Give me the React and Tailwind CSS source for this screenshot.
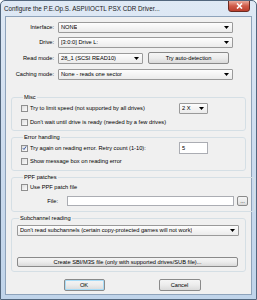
import React from "react";

function Arrow() {
  return (
    <svg width="5" height="3" viewBox="0 0 5 3" className="shrink-0">
      <path d="M0 0H5L2.5 3Z" fill="#000" />
    </svg>
  );
}

function Combo({ text, className = "" }) {
  return (
    <div
      className={
        "flex items-center justify-between h-[11px] pl-[2px] pr-[3px] border border-[#9a9a9a] rounded-[1px] bg-gradient-to-b from-[#fdfdfd] to-[#ebebeb] " +
        className
      }
    >
      <span className="truncate">{text}</span>
      <Arrow />
    </div>
  );
}

function Button({ children, className = "" }) {
  return (
    <div
      className={
        "flex items-center justify-center border border-[#8a8a8a] rounded-[2px] bg-gradient-to-b from-[#f5f5f5] via-[#ececec] to-[#dadada] " +
        className
      }
    >
      {children}
    </div>
  );
}

function Check({ checked, label }) {
  return (
    <div className="flex items-center gap-[2px] h-[9px]">
      <div className="w-[7px] h-[7px] border border-[#8f8f8f] bg-gradient-to-br from-[#dedede] to-[#fbfbfb] flex items-center justify-center shrink-0">
        {checked && (
          <svg width="6" height="6" viewBox="0 0 6 6">
            <path d="M1 3.2L2.4 4.8L5 1" stroke="#3b5aa0" strokeWidth="1.2" fill="none" />
          </svg>
        )}
      </div>
      <span className="whitespace-nowrap">{label}</span>
    </div>
  );
}

function Group({ title, children, className = "" }) {
  return (
    <fieldset
      className={
        "border border-[#d5dfe5] rounded-[3px] mx-[5px] " + className
      }
    >
      <legend className="ml-[2px] px-[1px] leading-[7px] text-[#000]">{title}</legend>
      {children}
    </fieldset>
  );
}

export default function App() {
  return (
    <div className="w-[257px] h-[300px] flex flex-col bg-gradient-to-b from-[#dfe9f5] via-[#cddcee] to-[#c0d4ea] border border-[#52667d] rounded-t-[5px] relative font-['Liberation_Sans',sans-serif] text-[5.7px] text-black overflow-hidden">
      <div className="h-[15px] shrink-0 flex items-center pl-[3px] text-[6.3px] text-[#1a1a1a]">
        Configure the P.E.Op.S. ASPI/IOCTL PSX CDR Driver...
      </div>
      <div className="absolute right-[6px] top-[-1px] w-[22px] h-[12px] rounded-b-[3px] border border-[#6b2b22] bg-gradient-to-b from-[#e9a99b] via-[#cf5a48] to-[#bb3e2c] flex items-center justify-center">
        <svg width="7" height="6" viewBox="0 0 7 6">
          <path d="M1 0.5L6 5.5M6 0.5L1 5.5" stroke="#fff" strokeWidth="1.6" />
        </svg>
      </div>

      <div className="flex-1 mx-[4px] mb-[4px] border border-[#8ea3bb] bg-[#f0f0f0] flex flex-col">
        <div className="flex flex-col gap-[4px] pt-[5px] pr-[18px]">
          <div className="flex items-center gap-[4px]">
            <span className="w-[48px] text-right">Interface:</span>
            <Combo text="NONE" className="flex-1" />
          </div>
          <div className="flex items-center gap-[4px]">
            <span className="w-[48px] text-right">Drive:</span>
            <Combo text="[3:0:0] Drive L:" className="flex-1" />
          </div>
          <div className="flex items-center gap-[4px]">
            <span className="w-[48px] text-right">Read mode:</span>
            <Combo text="28_1 (SCSI READ10)" className="w-[85px]" />
            <Button className="w-[81px] h-[12px] ml-[1px]">Try auto-detection</Button>
          </div>
          <div className="flex items-center gap-[4px] mt-[1px]">
            <span className="w-[48px] text-right">Caching mode:</span>
            <Combo text="None - reads one sector" className="flex-1" />
          </div>
        </div>

        <Group title="Misc" className="mt-[14px] pl-[9px] pr-[6px] pb-[3px]">
          <div className="flex flex-col gap-[4px] pt-[2px]">
            <div className="flex items-center justify-between pr-[31px]">
              <Check label="Try to limit speed (not supported by all drives)" />
              <Combo text="2 X" className="w-[29px] h-[10px]" />
            </div>
            <Check label="Don't wait until drive is ready (needed by a few drives)" />
          </div>
        </Group>

        <Group title="Error handling" className="mt-[3px] pl-[9px] pr-[6px] pb-[4px]">
          <div className="flex flex-col gap-[3px] pt-[1px]">
            <div className="flex items-center justify-between pr-[31px]">
              <Check checked label="Try again on reading error. Retry count (1-10):" />
              <div className="w-[29px] h-[12px] border border-[#abadb3] bg-white flex items-center pl-[2px]">5</div>
            </div>
            <Check label="Show message box on reading error" />
          </div>
        </Group>

        <Group title="PPF patches" className="mt-[3px] pl-[9px] pr-[6px] pb-[5px]">
          <div className="flex flex-col gap-[4px] pt-[2px]">
            <Check label="Use PPF patch file" />
            <div className="flex items-center">
              <span className="w-[38px] text-right pr-[1px]">File:</span>
              <div className="ml-[8px] w-[167px] h-[10px] border border-[#abadb3] bg-white" />
              <Button className="ml-[3px] w-[11px] h-[10px] leading-[6px]">...</Button>
            </div>
          </div>
        </Group>

        <Group title="Subchannel reading" className="mt-[3px] pl-[5px] pr-[6px] pb-[4px]">
          <div className="flex flex-col pt-[3px]">
            <Combo text="Don't read subchannels (certain copy-protected games will not work)" className="h-[10px]" />
            <Button className="mt-[21px] h-[10px] mr-[1px]">Create SBI/M3S file (only with supported drives/SUB file)...</Button>
          </div>
        </Group>

        <div className="flex justify-center gap-[54px] mt-[7px] pl-[7px]">
          <Button className="w-[41px] h-[12px] border-[#3c7fb1] shadow-[inset_0_0_0_1px_#a8dcf7]">OK</Button>
          <Button className="w-[42px] h-[12px]">Cancel</Button>
        </div>
      </div>
    </div>
  );
}
